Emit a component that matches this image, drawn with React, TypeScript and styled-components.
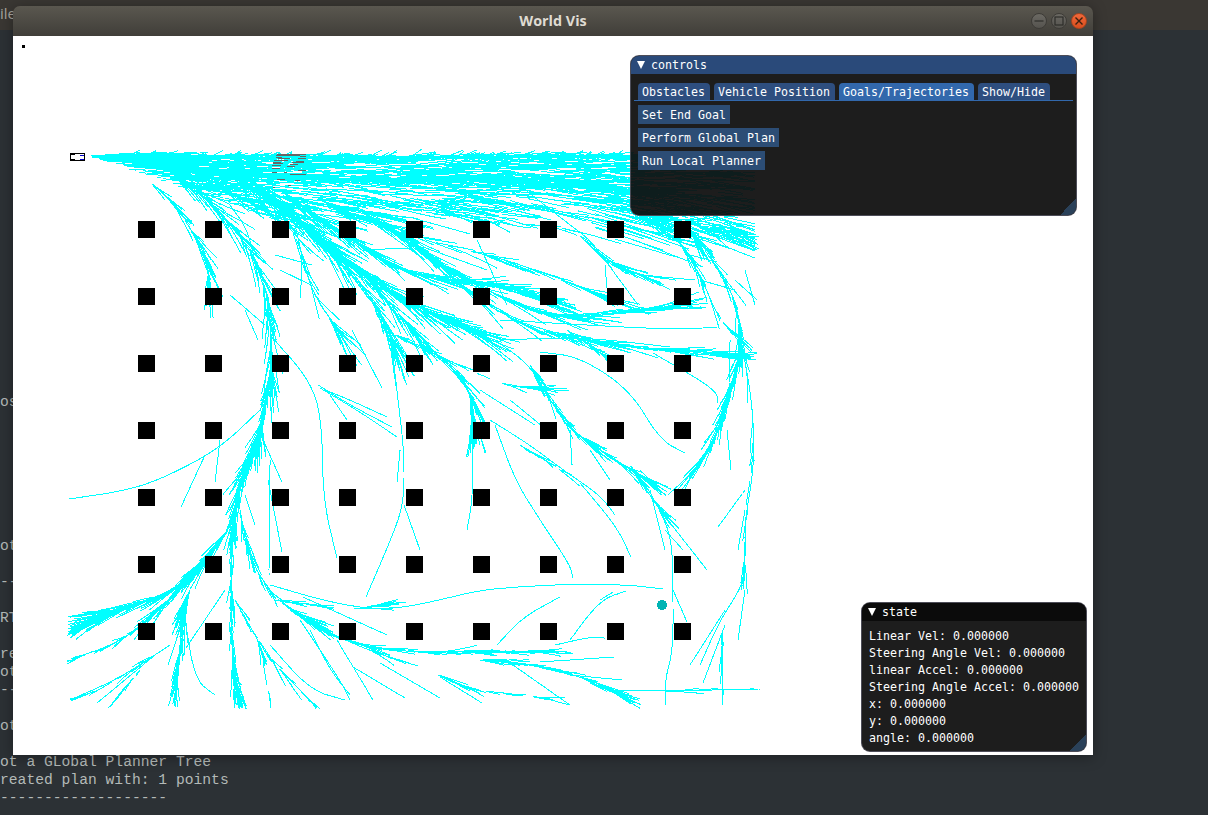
import styled, { createGlobalStyle } from 'styled-components';

type Point = [number, number];
type Fan = { pts: Point[]; twigs: number; spread: number; reach: number; from?: number };

const GlobalStyle = createGlobalStyle`
    html, body {
        margin: 0;
        padding: 0;
        background: #2c3135;
    }
`;

// seeded so the tree stays the same from one run to the next
const makeRandom = (seed: number) => () => {
    seed = (seed + 0x6d2b79f5) | 0;
    let t = Math.imul(seed ^ (seed >>> 15), 1 | seed);
    t = (t + Math.imul(t ^ (t >>> 7), 61 | t)) ^ t;
    return ((t ^ (t >>> 14)) >>> 0) / 4294967296;
};

const smooth = (pts: Point[]): Point[] => {
    let out = pts;
    for (let pass = 0; pass < 3; pass++) {
        const next: Point[] = [out[0]];
        for (let i = 0; i < out.length - 1; i++) {
            const [ax, ay] = out[i];
            const [bx, by] = out[i + 1];
            next.push([ax * 0.75 + bx * 0.25, ay * 0.75 + by * 0.25]);
            next.push([ax * 0.25 + bx * 0.75, ay * 0.25 + by * 0.75]);
        }
        next.push(out[out.length - 1]);
        out = next;
    }
    return out;
};

// dense parts of the tree: a stem with twigs growing off it
const FANS: Fan[] = [
    { pts: [[130, 165], [300, 180], [480, 178], [620, 190]], twigs: 300, spread: 0.06, reach: 55 },
    { pts: [[100, 158], [150, 178], [190, 225], [208, 262], [209, 280]], twigs: 50, spread: 0.2, reach: 30, from: 0.3 },
    { pts: [[170, 170], [225, 215], [262, 270], [272, 330], [271, 375]], twigs: 120, spread: 0.3, reach: 38 },
    { pts: [[271, 370], [262, 420]], twigs: 30, spread: 0.12, reach: 24 },
    { pts: [[190, 170], [250, 205], [295, 225], [310, 290], [338, 330]], twigs: 50, spread: 0.25, reach: 36 },
    { pts: [[230, 175], [290, 215], [330, 250], [375, 300], [392, 340]], twigs: 100, spread: 0.3, reach: 40 },
    { pts: [[250, 180], [320, 240], [400, 300], [470, 330]], twigs: 230, spread: 0.22, reach: 44 },
    { pts: [[280, 190], [350, 240], [415, 278], [500, 285], [530, 295]], twigs: 170, spread: 0.14, reach: 44 },
    { pts: [[300, 220], [370, 280], [420, 340], [470, 385], [473, 418]], twigs: 110, spread: 0.22, reach: 36 },
    { pts: [[320, 200], [420, 240], [510, 260], [600, 295]], twigs: 80, spread: 0.14, reach: 40 },
    { pts: [[360, 210], [480, 290], [560, 320], [650, 310]], twigs: 120, spread: 0.1, reach: 50 },
    { pts: [[400, 230], [500, 320], [600, 345], [735, 355]], twigs: 130, spread: 0.1, reach: 44 },
    { pts: [[567, 330], [603, 355]], twigs: 30, spread: 0.3, reach: 14 },
    { pts: [[420, 200], [500, 225], [570, 225], [605, 260], [640, 275]], twigs: 50, spread: 0.22, reach: 30 },
    { pts: [[620, 205], [673, 235], [690, 255], [720, 320], [731, 330]], twigs: 50, spread: 0.2, reach: 26 },
    { pts: [[640, 215], [700, 225], [755, 240]], twigs: 80, spread: 0.4, reach: 30 },
    { pts: [[690, 230], [735, 290], [741, 350]], twigs: 70, spread: 0.22, reach: 26 },
    { pts: [[741, 350], [730, 390], [715, 440], [695, 470]], twigs: 90, spread: 0.2, reach: 28 },
    { pts: [[741, 340], [752, 400], [754, 450], [745, 520], [745, 570]], twigs: 30, spread: 0.12, reach: 24 },
    { pts: [[395, 335], [500, 385], [530, 388]], twigs: 40, spread: 0.12, reach: 30 },
    { pts: [[530, 365], [570, 430], [600, 450], [640, 475]], twigs: 70, spread: 0.22, reach: 26 },
    { pts: [[630, 465], [660, 510]], twigs: 20, spread: 0.2, reach: 24 },
    { pts: [[520, 445], [560, 470]], twigs: 12, spread: 0.12, reach: 20 },
    { pts: [[262, 420], [255, 450], [240, 480], [233, 520]], twigs: 140, spread: 0.3, reach: 28 },
    { pts: [[233, 520], [231, 590], [232, 650], [238, 700]], twigs: 90, spread: 0.12, reach: 26 },
    { pts: [[232, 670], [240, 705]], twigs: 50, spread: 0.3, reach: 26 },
    { pts: [[228, 530], [205, 560], [180, 590], [130, 605], [72, 632]], twigs: 130, spread: 0.16, reach: 36 },
    { pts: [[130, 605], [72, 628]], twigs: 40, spread: 0.14, reach: 36 },
    { pts: [[120, 610], [68, 617]], twigs: 24, spread: 0.1, reach: 30 },
    { pts: [[205, 560], [170, 600], [125, 640], [66, 662]], twigs: 70, spread: 0.12, reach: 26 },
    { pts: [[190, 590], [183, 610], [180, 660], [172, 708]], twigs: 70, spread: 0.2, reach: 36 },
    { pts: [[155, 655], [100, 690], [70, 700]], twigs: 14, spread: 0.14, reach: 20 },
    { pts: [[140, 670], [112, 704]], twigs: 12, spread: 0.15, reach: 14 },
    { pts: [[240, 510], [250, 560], [275, 600], [310, 620]], twigs: 40, spread: 0.2, reach: 26 },
    { pts: [[275, 600], [345, 610], [375, 606]], twigs: 25, spread: 0.05, reach: 30 },
    { pts: [[235, 600], [270, 660], [300, 690], [315, 705]], twigs: 25, spread: 0.18, reach: 26 },
    { pts: [[240, 610], [260, 640], [270, 700]], twigs: 12, spread: 0.15, reach: 22 },
    { pts: [[290, 610], [360, 650], [470, 652]], twigs: 70, spread: 0.1, reach: 30 },
    { pts: [[470, 652], [545, 652]], twigs: 40, spread: 0.04, reach: 24 },
    { pts: [[370, 650], [440, 675], [470, 690], [545, 698]], twigs: 30, spread: 0.1, reach: 24 },
    { pts: [[480, 660], [540, 665], [590, 680], [615, 692]], twigs: 60, spread: 0.08, reach: 30 },
    { pts: [[590, 683], [615, 692]], twigs: 30, spread: 0.12, reach: 20 },
    { pts: [[665, 691], [760, 689]], twigs: 16, spread: 0.06, reach: 28 },
    { pts: [[722, 630], [722, 680]], twigs: 10, spread: 0.1, reach: 20 },
];

// single long branches, traced one by one
const STEMS: Point[][] = [
    [[270, 335], [310, 380], [322, 420], [323, 500], [337, 558]],
    [[325, 390], [350, 400], [387, 417]],
    [[318, 385], [350, 405], [392, 427]],
    [[320, 388], [360, 412], [397, 437]],
    [[330, 395], [347, 420]],
    [[352, 330], [382, 388]],
    [[390, 330], [398, 400], [404, 450], [404, 500], [395, 530], [366, 597]],
    [[404, 505], [420, 550]],
    [[400, 450], [397, 483]],
    [[472, 420], [473, 497], [467, 530]],
    [[480, 390], [535, 425]],
    [[490, 420], [530, 445], [563, 470], [600, 495], [615, 515]],
    [[580, 483], [617, 527], [631, 557]],
    [[495, 425], [515, 480], [540, 520], [570, 565], [573, 578]],
    [[510, 400], [547, 430]],
    [[495, 340], [530, 365], [550, 400], [570, 430], [600, 450], [640, 475], [660, 510], [672, 540], [673, 590], [673, 650], [665, 680], [665, 705]],
    [[570, 430], [572, 465]],
    [[590, 450], [610, 480]],
    [[640, 470], [665, 495]],
    [[650, 490], [665, 550]],
    [[660, 510], [707, 570]],
    [[665, 530], [683, 550]],
    [[540, 352], [580, 357], [630, 390], [660, 440], [685, 453]],
    [[560, 335], [605, 355]],
    [[653, 353], [717, 390], [717, 403]],
    [[740, 330], [741, 350], [730, 390], [715, 440], [695, 470], [668, 495]],
    [[741, 340], [752, 400], [754, 450], [752, 480], [745, 520], [745, 570], [740, 590], [720, 620], [700, 665]],
    [[745, 490], [718, 527]],
    [[745, 510], [738, 550]],
    [[745, 590], [738, 640]],
    [[725, 610], [690, 665]],
    [[722, 630], [722, 705]],
    [[725, 625], [703, 683]],
    [[727, 430], [731, 470]],
    [[730, 340], [729, 385]],
    [[270, 585], [340, 605], [390, 610], [440, 600], [480, 590], [530, 586], [580, 584], [630, 585], [663, 589]],
    [[303, 597], [387, 635]],
    [[497, 645], [523, 617], [560, 597]],
    [[570, 640], [600, 600], [626, 591]],
    [[600, 600], [613, 592]],
    [[555, 645], [590, 637], [605, 638]],
    [[510, 663], [570, 705]],
    [[440, 677], [482, 703]],
    [[310, 630], [330, 670], [350, 695]],
    [[337, 640], [373, 700]],
    [[353, 667], [405, 698]],
    [[380, 663], [440, 698]],
    [[270, 645], [310, 690], [345, 700]],
    [[280, 670], [315, 705]],
    [[540, 662], [614, 657]],
    [[570, 675], [622, 680]],
    [[615, 690], [665, 691], [760, 689]],
    [[673, 590], [687, 622]],
    [[260, 410], [220, 448], [170, 475], [130, 490], [69, 499]],
    [[205, 455], [181, 507]],
    [[220, 440], [215, 482]],
    [[263, 440], [282, 482]],
    [[245, 495], [255, 525]],
    [[270, 460], [269, 575]],
    [[268, 480], [282, 552]],
    [[225, 590], [186, 648]],
    [[185, 620], [195, 680], [215, 695]],
    [[170, 645], [120, 678], [70, 700]],
    [[155, 655], [97, 703]],
    [[300, 620], [340, 680], [350, 700]],
    [[295, 225], [310, 290], [338, 330], [355, 340]],
    [[230, 205], [250, 233], [260, 293]],
    [[230, 295], [265, 325]],
    [[245, 310], [258, 340]],
    [[275, 255], [312, 265]],
    [[280, 270], [311, 285]],
    [[363, 250], [408, 248]],
    [[373, 223], [425, 260]],
    [[423, 247], [487, 270]],
    [[477, 240], [507, 305]],
    [[500, 170], [570, 225], [590, 240], [605, 260], [620, 270], [640, 275], [695, 280]],
    [[605, 265], [607, 288]],
    [[605, 260], [638, 305]],
    [[690, 255], [717, 262]],
    [[700, 280], [735, 290]],
    [[735, 280], [757, 300]],
    [[745, 270], [755, 305]],
    [[500, 320], [673, 330], [717, 327]],
    [[500, 340], [583, 337], [670, 347]],
];

const buildTree = () => {
    const random = makeRandom(20);
    const lines: string[] = [];
    const add = (pts: Point[]) =>
        lines.push('M' + pts.map(([x, y]) => `${x.toFixed(1)} ${y.toFixed(1)}`).join('L'));

    // the wedge and band along the top, almost horizontal strokes
    for (let i = 0; i < 1300; i++) {
        const x = 90 + random() * 640;
        const depth = x > 590 ? 85 : Math.min(62, (x - 88) * 0.34);
        const y = 156 + Math.pow(random(), 1.5) * depth;
        const length = 12 + random() * 60;
        const tilt = (random() - 0.5) * 0.24 + (y - 170) * 0.005;
        const ceiling = 152 + random() * 6;
        add([[x, y], [Math.min(x + length, 755), Math.max(y + length * tilt, ceiling)]]);
    }
    // spikes on the top edge
    for (let i = 0; i < 70; i++) {
        const x = 120 + random() * 600;
        const y = 152 + random() * 3;
        add([[x, y + 6], [x + 10 + random() * 14, y - random() * 3]]);
    }

    STEMS.forEach((stem) => add(smooth(stem)));

    for (const fan of FANS) {
        const path = smooth(fan.pts);
        const start = fan.from ?? 0;
        for (let i = 0; i < fan.twigs; i++) {
            const t = start + random() * (1 - start);
            const at = Math.min(path.length - 2, Math.floor(t * (path.length - 1)));
            const [ax, ay] = path[at];
            const [bx, by] = path[at + 1];
            let angle = Math.atan2(by - ay, bx - ax) + (random() - 0.5) * 2 * fan.spread;
            let x = ax;
            let y = ay;
            const pts: Point[] = [[x, y]];
            const step = (fan.reach * (0.35 + random())) / 3;
            for (let s = 0; s < 3; s++) {
                angle += (random() - 0.5) * 0.16;
                x += Math.cos(angle) * step;
                y += Math.sin(angle) * step;
                if (y > 709 || x < 67 || x > 759) break;
                pts.push([x, y]);
            }
            if (pts.length > 1) add(pts);
        }
    }
    return lines.join('');
};

const TREE_PATH = buildTree();

// grey goal area, mostly hidden under the tree
const GOAL_SMEAR =
    'M277 154.5h29M276 155.5h24M300 156.5h6M276 157.5h6M278 158.5h12M298 158.5h8M274 160.5h14M296 161.5h8M273 162.5h8M292 162.5h12M273 163.5h10M290 164.5h8M272 165.5h9M287 166.5h8M272 168.5h8M298 170.5h8M272 172.5h5M284 172.5h3M290 174.5h16M277 179.5h8M295 180.5h5M273 187.5h2M288 185.5h3';

const COLUMNS = [138, 205, 272, 339, 406, 473, 540, 607, 674];
const ROWS = [221, 288, 355, 422, 489, 556, 623];

const TERMINAL_ROWS: Record<number, string> = {
    20: 'os',
    28: 'ot',
    30: '--',
    32: 'RT',
    34: 're',
    35: 'ot',
    36: '--',
    38: 'ot',
    40: 'ot a GLobal Planner Tree',
    41: 'reated plan with: 1 points',
    42: '-------------------',
};

const STATE_LINES = [
    'Linear Vel: 0.000000',
    'Steering Angle Vel: 0.000000',
    'linear Accel: 0.000000',
    'Steering Angle Accel: 0.000000',
    'x: 0.000000',
    'y: 0.000000',
    'angle: 0.000000',
];

const World = () => (
    <WorldSvg viewBox="13 36 1080 719">
        <rect x="22" y="45" width="3" height="3" fill="#000" />
        <path d={TREE_PATH} fill="none" stroke="#00ffff" strokeWidth="1" />
        <path d={GOAL_SMEAR} fill="none" stroke="#666" strokeWidth="1" />
        {ROWS.map((y) =>
            COLUMNS.map((x) => <rect key={`${x}-${y}`} x={x} y={y} width="17" height="17" fill="#000" />)
        )}
        <circle cx="662" cy="605" r="5" fill="#00b4b4" />
        <rect x="70" y="153" width="15" height="8" fill="#000" />
        <rect x="71" y="154" width="13" height="6" fill="#fff" />
        <rect x="71" y="154" width="4" height="1" fill="#000" />
        <rect x="71" y="159" width="4" height="1" fill="#000" />
        <rect x="80" y="155" width="4" height="1" fill="#0000d0" />
        <rect x="80" y="159" width="4" height="1" fill="#0000d0" />
    </WorldSvg>
);

const App = () => (
    <Page>
        <GlobalStyle />
        <MenuBar>ile</MenuBar>
        <Terminal>
            {Array.from({ length: 43 }, (_, row) => (
                <TerminalRow key={row}>{TERMINAL_ROWS[row] ?? ''}</TerminalRow>
            ))}
        </Terminal>

        <Window>
            <TitleBar>
                <WindowTitle>World Vis</WindowTitle>
                <WindowButtons>
                    <WindowButton>
                        <svg width="12" height="12" viewBox="0 0 12 12">
                            <path d="M1.5 6h9" stroke="#2e2d2a" strokeWidth="1.2" />
                        </svg>
                    </WindowButton>
                    <WindowButton>
                        <svg width="12" height="12" viewBox="0 0 12 12">
                            <rect x="2" y="2" width="8" height="8" fill="none" stroke="#2e2d2a" strokeWidth="1.2" />
                        </svg>
                    </WindowButton>
                    <WindowButton $close>
                        <svg width="12" height="12" viewBox="0 0 12 12">
                            <path d="M2.5 2.5l7 7M9.5 2.5l-7 7" stroke="#3a2010" strokeWidth="1.4" />
                        </svg>
                    </WindowButton>
                </WindowButtons>
            </TitleBar>
            <Canvas>
                <World />
                <ControlsPanel>
                    <PanelTitle>
                        <Arrow />
                        controls
                    </PanelTitle>
                    <TabBar>
                        <Tab>Obstacles</Tab>
                        <Tab>Vehicle Position</Tab>
                        <Tab $active>Goals/Trajectories</Tab>
                        <Tab>Show/Hide</Tab>
                    </TabBar>
                    <ButtonColumn>
                        <PanelButton>Set End Goal</PanelButton>
                        <PanelButton>Perform Global Plan</PanelButton>
                        <PanelButton>Run Local Planner</PanelButton>
                    </ButtonColumn>
                    <ResizeGrip />
                </ControlsPanel>
                <StatePanel>
                    <PanelTitle $dark>
                        <Arrow />
                        state
                    </PanelTitle>
                    <StateList>
                        {STATE_LINES.map((line) => (
                            <StateLine key={line}>{line}</StateLine>
                        ))}
                    </StateList>
                    <ResizeGrip />
                </StatePanel>
            </Canvas>
        </Window>
    </Page>
);

export default App;

const Page = styled.div`
    position: relative;
    width: 1208px;
    height: 815px;
    overflow: hidden;
    background: #2c3135;
`;

const MenuBar = styled.div`
    height: 30px;
    background: #3a3733;
    color: #a8a59e;
    font: 15px/27px 'Open Sans', sans-serif;
    white-space: pre;
`;

const Terminal = styled.div`
    padding-top: 3px;
    color: #b4bab8;
    font: 14.67px/18px 'Liberation Mono', monospace;
`;

const TerminalRow = styled.div`
    height: 18px;
    white-space: pre;
`;

const Window = styled.div`
    position: absolute;
    left: 13px;
    top: 6px;
    width: 1080px;
    height: 749px;
    display: flex;
    flex-direction: column;
    border-radius: 7px 7px 0 0;
    box-shadow: 0 2px 14px rgba(0, 0, 0, 0.35);
`;

const TitleBar = styled.div`
    position: relative;
    flex: 0 0 30px;
    display: flex;
    align-items: center;
    justify-content: center;
    border-radius: 7px 7px 0 0;
    background: linear-gradient(#5a574f, #403e39);
`;

const WindowTitle = styled.div`
    margin-top: -1px;
    color: #dfdbd2;
    font: bold 14.4px 'Open Sans', sans-serif;
`;

const WindowButtons = styled.div`
    position: absolute;
    right: 6px;
    top: 7px;
    display: flex;
    gap: 4px;
`;

const WindowButton = styled.div<{ $close?: boolean }>`
    box-sizing: border-box;
    width: 16px;
    height: 16px;
    display: flex;
    align-items: center;
    justify-content: center;
    border-radius: 50%;
    border: 1px solid ${({ $close }) => ($close ? '#a8441f' : '#3d3b37')};
    background: ${({ $close }) =>
        $close ? 'linear-gradient(#f0683a, #d94e1e)' : 'linear-gradient(#6b6963, #55534e)'};
`;

const Canvas = styled.div`
    position: relative;
    flex: 1;
    background: #fff;
`;

const WorldSvg = styled.svg`
    display: block;
    width: 1080px;
    height: 719px;
    shape-rendering: crispEdges;
`;

const Panel = styled.div`
    position: absolute;
    box-sizing: border-box;
    border: 1px solid rgba(110, 110, 128, 0.6);
    border-radius: 9px;
    overflow: hidden;
    background: rgba(15, 15, 15, 0.94);
    color: #fff;
    font: 11.63px/17px 'DejaVu Sans Mono', monospace;
`;

const ControlsPanel = styled(Panel)`
    left: 617px;
    top: 19px;
    width: 447px;
    height: 161px;
`;

const StatePanel = styled(Panel)`
    left: 848px;
    top: 566px;
    width: 226px;
    height: 150px;
`;

const PanelTitle = styled.div<{ $dark?: boolean }>`
    box-sizing: border-box;
    height: 18px;
    display: flex;
    align-items: center;
    padding: 1px 0 0 6px;
    white-space: pre;
    background: ${({ $dark }) => ($dark ? '#0b0b0b' : '#2a4a7a')};
`;

const Arrow = styled.span`
    width: 0;
    height: 0;
    margin: -1px 6px 0 0;
    border-left: 4px solid transparent;
    border-right: 4px solid transparent;
    border-top: 8px solid #fff;
`;

const TabBar = styled.div`
    display: flex;
    gap: 4px;
    margin: 9px 3px 0;
    padding-left: 4px;
    border-bottom: 1px solid #3268ac;
`;

const Tab = styled.div<{ $active?: boolean }>`
    box-sizing: border-box;
    height: 17px;
    padding: 1px 5px 0 4px;
    border-radius: 4px 4px 0 0;
    white-space: pre;
    background: ${({ $active }) => ($active ? '#3268ac' : '#2e4e7f')};
`;

const ButtonColumn = styled.div`
    display: flex;
    flex-direction: column;
    align-items: flex-start;
    gap: 4px;
    margin: 4px 0 0 7px;
`;

const PanelButton = styled.div`
    height: 19px;
    padding: 0 4px;
    line-height: 21px;
    white-space: pre;
    background: #2c4d75;
`;

const StateList = styled.div`
    padding: 7px 0 0 7px;
`;

const StateLine = styled.div`
    height: 17px;
    white-space: pre;
`;

const ResizeGrip = styled.div`
    position: absolute;
    right: 0;
    bottom: 0;
    width: 16px;
    height: 16px;
    background: linear-gradient(135deg, transparent 50%, #2a4159 50%);
`;
